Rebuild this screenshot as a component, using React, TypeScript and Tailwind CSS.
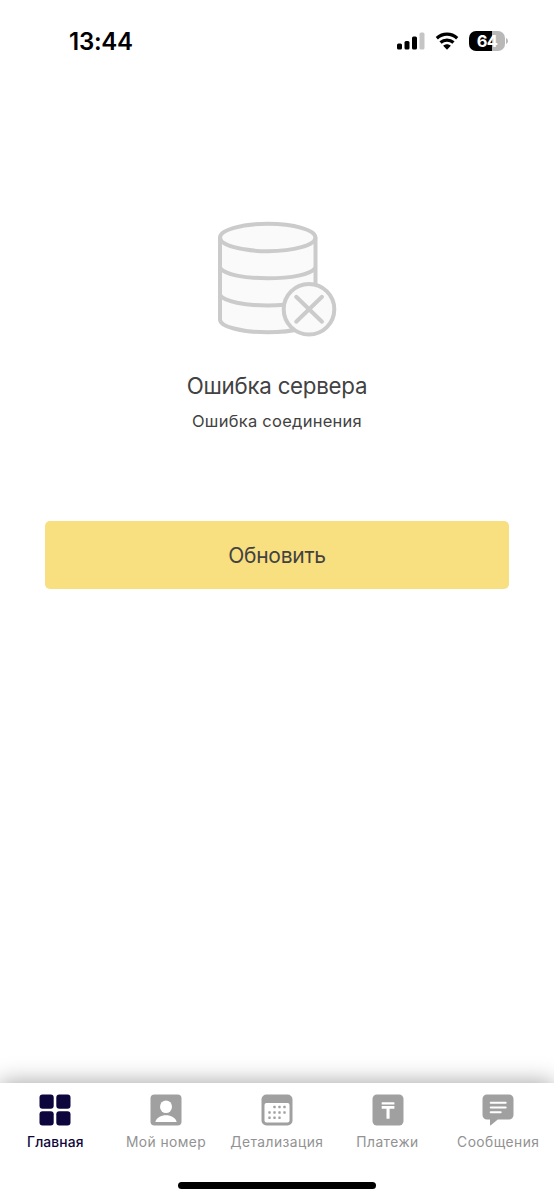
import type { ReactNode } from 'react';

function StatusBar() {
  return (
    <header className="flex h-[82px] shrink-0 items-center justify-between pl-[69px] pr-[46px]">
      <span className="mt-[2px] text-[24px] leading-none font-semibold tracking-[-0.25px] text-black">13:44</span>
      <div className="flex items-center">
        <svg width="28" height="18" viewBox="0 0 28 18" aria-hidden="true">
          <rect x="0" y="11.5" width="5" height="6" rx="1.5" fill="#000" />
          <rect x="7.5" y="9" width="5" height="8.5" rx="1.5" fill="#000" />
          <rect x="15" y="4.5" width="5" height="13" rx="1.5" fill="#000" />
          <rect x="22.5" y="0.5" width="5" height="17" rx="1.5" fill="#c5c5c5" />
        </svg>
        <svg className="ml-[10px]" width="25" height="18" viewBox="0 0 25 18" aria-hidden="true">
          <path d="M1.8 6.2C7.8 .8 16.2 .8 22.2 6.2" fill="none" stroke="#000" strokeWidth="3.3" />
          <path d="M5.5 10.5C9.3 7.2 14.7 7.2 18.5 10.5" fill="none" stroke="#000" strokeWidth="3.2" />
          <path d="M8.2 13.8c2.2-2 5.4-2 7.6 0L12 17.8Z" fill="#000" />
        </svg>
        <div className="ml-[9px] flex h-5 w-[36px] items-center justify-center overflow-hidden rounded-[7px] bg-linear-to-r from-black from-64% to-[#b8b8b8] to-64%">
          <span className="mt-px text-[16.5px] leading-none font-bold tracking-[-0.8px] text-white">64</span>
        </div>
        <svg className="ml-px" width="2" height="6" viewBox="0 0 2 6" aria-hidden="true">
          <path d="M0 0C2.6 1 2.6 5 0 6Z" fill="#b8b8b8" />
        </svg>
      </div>
    </header>
  );
}

function ServerErrorIcon() {
  return (
    <svg width="145" height="140" viewBox="0 0 145 140" fill="#fafafa" stroke="#cbcbcb" strokeWidth="4" aria-hidden="true">
      <path d="M15 27.5V109.5C15 116.5 36 122.3 62.5 122.3S110.5 116.5 110.5 109.5V27.5" />
      <ellipse cx="62.7" cy="27.5" rx="47.7" ry="13.7" />
      <path d="M15 58C20 64.5 39 68.3 62.7 68.3S105.5 64.5 110.5 58" fill="none" />
      <path d="M15 85.3C20 91.7 39 95.5 62.7 95.5S105.5 91.7 110.5 85.3" fill="none" />
      <circle cx="104" cy="99.2" r="25.3" />
      <path d="M91.2 86.8 117 111.7M117 86.8 91.2 111.7" strokeLinecap="round" />
    </svg>
  );
}

function TabIcon({ children }: { children: ReactNode }) {
  return (
    <svg width="32" height="32" viewBox="0 0 32 32" fill="currentColor" aria-hidden="true">
      {children}
    </svg>
  );
}

const dots = [
  [13.5, 13], [18.5, 13], [23.5, 13],
  [8.5, 18.5], [13.5, 18.5], [18.5, 18.5], [23.5, 18.5],
  [8.5, 23.7], [13.5, 23.7], [18.5, 23.7],
];

const tabs = [
  {
    label: 'Главная',
    active: true,
    icon: (
      <>
        <rect x="0.5" y="0.5" width="14.2" height="14.2" rx="3" />
        <rect x="17.3" y="0.5" width="14.2" height="14.2" rx="3" />
        <rect x="0.5" y="17.3" width="14.2" height="14.2" rx="3" />
        <rect x="17.3" y="17.3" width="14.2" height="14.2" rx="3" />
      </>
    ),
  },
  {
    label: 'Мой номер',
    icon: (
      <>
        <rect x="0.5" y="0.5" width="31" height="31" rx="4" />
        <ellipse cx="16" cy="12.8" rx="6" ry="6.3" fill="#fff" />
        <path d="M5.3 28C6.5 23.7 11 21.3 16 21.3S25.5 23.7 26.7 28Z" fill="#fff" />
      </>
    ),
  },
  {
    label: 'Детализация',
    icon: (
      <>
        <rect x="0.5" y="0.5" width="31" height="31" rx="5" />
        <rect x="3.5" y="9" width="25" height="19.5" rx="2" fill="#fff" />
        {dots.map(([x, y]) => (
          <rect key={`${x}-${y}`} x={x - 1.2} y={y - 1.2} width="2.4" height="2.4" rx="0.6" />
        ))}
      </>
    ),
  },
  {
    label: 'Платежи',
    icon: (
      <>
        <rect x="0.5" y="0.5" width="31" height="31" rx="4.5" />
        <path d="M9.7 8.3h12.7v2.1H9.7zM9.7 12h12.7v2.8h-4.8v10h-3.1v-10H9.7z" fill="#fff" />
      </>
    ),
  },
  {
    label: 'Сообщения',
    icon: (
      <>
        <path d="M5 .5H27A4.5 4.5 0 0 1 31.5 5V21A4.5 4.5 0 0 1 27 25.5H15.8L8.8 31.3Q8 31.8 8 30.8V25.5H5A4.5 4.5 0 0 1 .5 21V5A4.5 4.5 0 0 1 5 .5Z" />
        <path d="M8.7 8.7H23.7M8.7 13.4H23.7M8.7 18.2H18.7" stroke="#fff" strokeWidth="2" strokeLinecap="round" />
      </>
    ),
  },
];

function TabBar() {
  return (
    <nav className="flex h-[117px] shrink-0 flex-col items-center bg-white shadow-[0_0_22px_rgba(0,0,0,0.38)]">
      <div className="grid w-full grid-cols-5 pr-[0.4px] pt-[10.5px]">
        {tabs.map((tab) => (
          <button
            key={tab.label}
            className={`flex flex-col items-center text-[13.8px] ${
              tab.active ? 'font-medium tracking-[0.15px] text-[#0d063c]' : 'tracking-[0.45px] text-[#a0a0a0]'
            }`}
          >
            <TabIcon>{tab.icon}</TabIcon>
            <span className={`mt-[6px] leading-5 whitespace-nowrap ${tab.active ? '' : 'text-[#929292]'}`}>{tab.label}</span>
          </button>
        ))}
      </div>
      <div className="mt-auto mb-[11px] h-[7px] w-[198px] rounded-full bg-black" />
    </nav>
  );
}

export default function App() {
  return (
    <div className="flex h-[1200px] w-[554px] flex-col overflow-hidden bg-white font-['Inter','Liberation_Sans',sans-serif]">
      <StatusBar />
      <main className="flex flex-1 flex-col items-center px-[45px] pt-[128px] text-[#424242]">
        <ServerErrorIcon />
        <h1 className="mt-5 text-[22.3px] leading-8 tracking-[-0.25px]">Ошибка сервера</h1>
        <p className="mt-[7px] text-[16.5px] leading-6 tracking-[0.26px]">Ошибка соединения</p>
        <button className="mt-[88px] h-[67.5px] w-full rounded-[5px] bg-[#f8df80] pt-[2px] text-[21px] tracking-[-0.25px]">
          Обновить
        </button>
      </main>
      <TabBar />
    </div>
  );
}
